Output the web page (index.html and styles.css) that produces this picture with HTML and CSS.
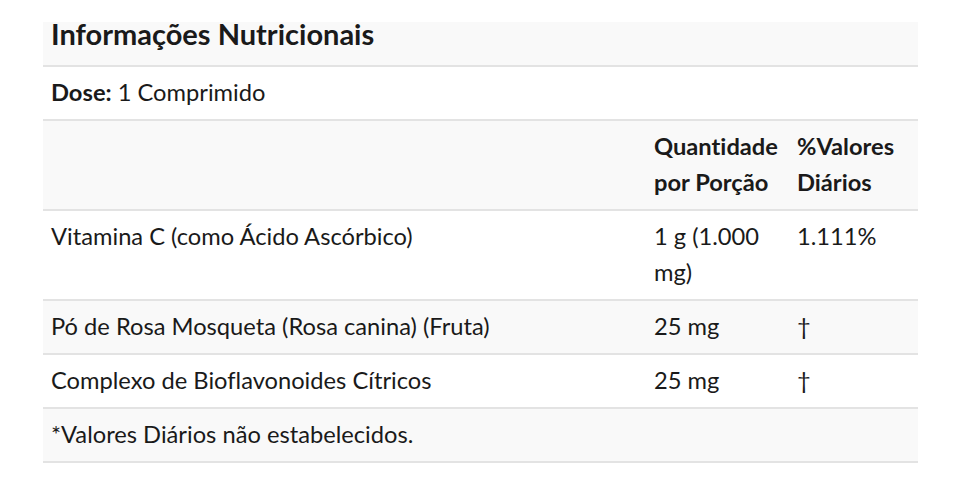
FILE: index.html
```html
<!DOCTYPE html>
<html lang="pt-BR">

<head>
    <meta charset="UTF-8">
    <meta name="viewport" content="width=device-width, initial-scale=1.0">
    <title>Informações Nutricionais</title>
    <link rel="stylesheet" href="styles.css">
</head>

<body>
    <table class="facts">
        <colgroup>
            <col class="col-name">
            <col class="col-amount">
            <col class="col-dv">
        </colgroup>
        <thead>
            <tr class="title-row">
                <th colspan="3">Informações Nutricionais</th>
            </tr>
            <tr class="dose-row">
                <td colspan="3"><strong>Dose:</strong> 1 Comprimido</td>
            </tr>
            <tr class="head-row">
                <th></th>
                <th>Quantidade por Porção</th>
                <th>%Valores Diários</th>
            </tr>
        </thead>
        <tbody>
            <tr>
                <td>Vitamina C (como Ácido Ascórbico)</td>
                <td>1 g (1.000 mg)</td>
                <td>1.111%</td>
            </tr>
            <tr>
                <td>Pó de Rosa Mosqueta (Rosa canina) (Fruta)</td>
                <td>25 mg</td>
                <td>†</td>
            </tr>
            <tr>
                <td>Complexo de Bioflavonoides Cítricos</td>
                <td>25 mg</td>
                <td>†</td>
            </tr>
            <tr>
                <td colspan="3">*Valores Diários não estabelecidos.</td>
            </tr>
        </tbody>
    </table>
</body>

</html>
```

FILE: styles.css
```css
* {
    padding: 0;
    margin: 0;
    box-sizing: border-box;
}

body {
    background: #ffffff;
    font-family: 'Lato', 'Liberation Sans', sans-serif;
    font-variant-ligatures: none;
    color: #1a1a1a;
    padding: 22px 43px 0 43px;
}

.facts {
    width: 875px;
    border-collapse: collapse;
    table-layout: fixed;
    font-size: 23.7px;
}

.col-name {
    width: 603px;
}

.col-amount {
    width: 143px;
}

.col-dv {
    width: 129px;
}

.facts th,
.facts td {
    text-align: left;
    vertical-align: top;
    padding: 7px 8px 9px 8px;
    line-height: 36px;
    border-bottom: 2px solid #e3e3e3;
}

.facts th {
    font-weight: 700;
}

.facts .title-row th {
    font-size: 29px;
    line-height: 22px;
    padding: 1px 8px 20px 8px;
}

.facts thead tr:nth-child(odd) {
    background: #f9f9f9;
}

.facts tbody tr:nth-child(even) {
    background: #f9f9f9;
}

.dose-row strong {
    font-weight: 700;
}
```
